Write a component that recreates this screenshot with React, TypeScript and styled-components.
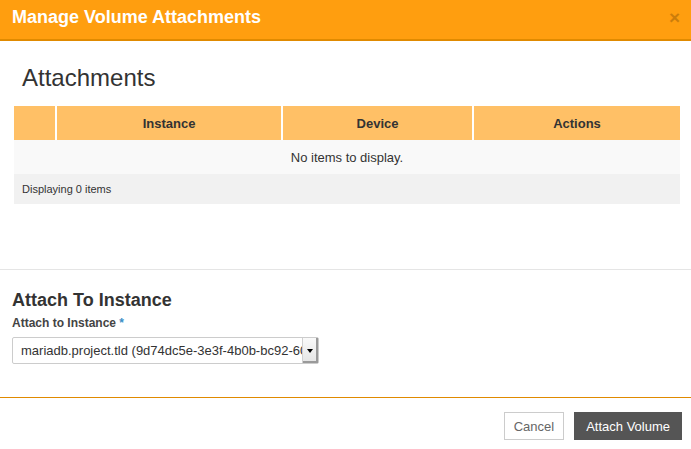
import React from "react";
import styled, { createGlobalStyle } from "styled-components";

const Global = createGlobalStyle`
  html, body { margin: 0; padding: 0; background: #fff; }
  body { font-family: "Liberation Sans", Arial, sans-serif; color: #333; }
  * { box-sizing: border-box; }
`;

const Modal = styled.div`
  width: 691px;
  height: 449px;
  display: flex;
  flex-direction: column;
  background: #fff;
  overflow: hidden;
`;

const Header = styled.div`
  height: 41px;
  padding: 7px 11px 0 12px;
  background: #ff9e0f;
  border-bottom: 2px solid #e08a00;
  display: flex;
  justify-content: space-between;
  align-items: flex-start;
`;

const Title = styled.h3`
  margin: 0;
  font-size: 18px;
  line-height: 20px;
  font-weight: bold;
  color: #fff;
`;

const Close = styled.span`
  font-size: 19px;
  line-height: 20px;
  font-weight: bold;
  color: #000;
  opacity: 0.2;
  padding-top: 1px;
`;

const Section = styled.div<{ $top: number; $bottom: number }>`
  padding: ${(p) => p.$top}px 11px ${(p) => p.$bottom}px 14px;
`;

const Heading = styled.h2`
  margin: 0 0 15px 8px;
  font-size: 24px;
  line-height: 26px;
  font-weight: normal;
  color: #333;
`;

const Table = styled.div`
  width: 666px;
  font-size: 13px;
`;

const HeadRow = styled.div`
  display: grid;
  grid-template-columns: 41px 224px 189px 1fr;
  column-gap: 2px;
  background: #fff;
`;

const HeadCell = styled.div`
  height: 34px;
  background: #ffc066;
  font-weight: bold;
  color: #333;
  display: flex;
  align-items: center;
  justify-content: center;
`;

const Row = styled.div<{ $h: number; $bg: string; $center?: boolean; $size: number }>`
  height: ${(p) => p.$h}px;
  background: ${(p) => p.$bg};
  display: flex;
  align-items: center;
  justify-content: ${(p) => (p.$center ? "center" : "flex-start")};
  padding: 0 8px;
  font-size: ${(p) => p.$size}px;
  color: #333;
`;

const Divider = styled.div<{ $color: string }>`
  height: 1px;
  background: ${(p) => p.$color};
`;

const Form = styled.div`
  padding: 20px 12px 0 12px;
  flex: 1;
`;

const SubHeading = styled.h4`
  margin: 0 0 5px 0;
  font-size: 18px;
  line-height: 20px;
  font-weight: bold;
  color: #333;
`;

const Label = styled.label`
  display: block;
  font-size: 12px;
  line-height: 17px;
  font-weight: bold;
  color: #444;
  margin-bottom: 5px;
`;

const Required = styled.span`
  color: #3d8fc6;
`;

const Select = styled.div`
  width: 307px;
  height: 27px;
  border: 1px solid #ccc;
  border-radius: 2px;
  display: flex;
  align-items: stretch;
  background: #fff;
`;

const SelectText = styled.div`
  flex: 1;
  overflow: hidden;
  white-space: nowrap;
  font-size: 13px;
  line-height: 25px;
  padding-left: 8px;
  color: #333;
`;

const SelectButton = styled.div`
  width: 16px;
  background: linear-gradient(#fafafa, #e4e4e4);
  border-left: 1px solid #d0d0d0;
  box-shadow: inset -2px -2px 0 #9a9a9a;
  display: flex;
  align-items: center;
  justify-content: center;
  padding-right: 2px;
`;

const Arrow = styled.div`
  width: 0;
  height: 0;
  border-left: 3px solid transparent;
  border-right: 3px solid transparent;
  border-top: 4px solid #000;
`;

const Footer = styled.div`
  border-top: 1px solid #e08a00;
  height: 52px;
  padding: 14px 9px 0 0;
  display: flex;
  justify-content: flex-end;
  gap: 10px;
`;

const Button = styled.button<{ $primary?: boolean }>`
  height: 28px;
  padding: 0 ${(p) => (p.$primary ? 11 : 9)}px;
  font-family: "Liberation Sans", Arial, sans-serif;
  font-size: 13px;
  border: 1px solid ${(p) => (p.$primary ? "#555" : "#ccc")};
  background: ${(p) => (p.$primary ? "#555" : "#fff")};
  color: ${(p) => (p.$primary ? "#fff" : "#666")};
  border-radius: 0;
  cursor: pointer;
`;

export default function App() {
  return (
    <>
      <Global />
      <Modal>
        <Header>
          <Title>Manage Volume Attachments</Title>
          <Close>×</Close>
        </Header>
        <Section $top={24} $bottom={65}>
          <Heading>Attachments</Heading>
          <Table>
            <HeadRow>
              <HeadCell />
              <HeadCell>Instance</HeadCell>
              <HeadCell>Device</HeadCell>
              <HeadCell>Actions</HeadCell>
            </HeadRow>
            <Row $h={34} $bg="#f9f9f9" $center $size={13}>
              No items to display.
            </Row>
            <Row $h={30} $bg="#f1f1f1" $size={11}>
              Displaying 0 items
            </Row>
          </Table>
        </Section>
        <Divider $color="#e5e5e5" />
        <Form>
          <SubHeading>Attach To Instance</SubHeading>
          <Label>
            Attach to Instance <Required>*</Required>
          </Label>
          <Select>
            <SelectText>mariadb.project.tld (9d74dc5e-3e3f-4b0b-bc92-60a1b2c3d4e5)</SelectText>
            <SelectButton>
              <Arrow />
            </SelectButton>
          </Select>
        </Form>
        <Footer>
          <Button>Cancel</Button>
          <Button $primary>Attach Volume</Button>
        </Footer>
      </Modal>
    </>
  );
}
